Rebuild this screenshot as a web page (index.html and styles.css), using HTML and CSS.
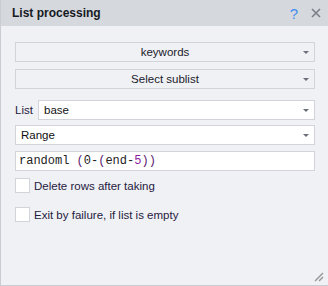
FILE: index.html
```html
<!DOCTYPE html>
<html lang="en">
<head>
    <meta charset="UTF-8">
    <title>List processing</title>
    <link rel="stylesheet" href="styles.css">
</head>
<body>
    <div class="window">
        <div class="titlebar">
            <span class="title">List processing</span>
            <span class="help">?</span>
            <svg class="close" width="10" height="10" viewBox="0 0 10 10">
                <path d="M1 1 L9 9 M9 1 L1 9" stroke="#7a7f8a" stroke-width="1.6"/>
            </svg>
        </div>
        <div class="content">
            <div class="select">keywords<span class="arrow"></span></div>
            <div class="select">Select sublist<span class="arrow"></span></div>

            <div class="row list-row">
                <label class="label">List</label>
                <div class="select white">base<span class="arrow"></span></div>
            </div>
            <div class="select white range">Range<span class="arrow"></span></div>
            <div class="field">randoml <span class="br">(</span>0-<span class="br">(</span>end-<span class="num">5</span><span class="br">))</span></div>

            <div class="check first"><span class="box"></span>Delete rows after taking</div>
            <div class="check"><span class="box"></span>Exit by failure, if list is empty</div>
        </div>
        <div class="grip">
            <svg width="11" height="11" viewBox="0 0 11 11">
                <path d="M10 2 L2 10 M10 6 L6 10" stroke="#9a9a9a" stroke-width="1.5"/>
            </svg>
        </div>
    </div>
</body>
</html>
```

FILE: styles.css
```css
body {
    margin: 0;
    font-family: "Liberation Sans", Arial, sans-serif;
    font-size: 11.5px;
    background: #f0f1f5;
    color: #1f2040;
}

.window {
    width: 328px;
    height: 286px;
    box-sizing: border-box;
    border-left: 1px solid #c9ccd2;
    border-bottom: 1px solid #c9ccd2;
    display: flex;
    flex-direction: column;
    position: relative;
    background: #f0f1f5;
}

.titlebar {
    height: 26px;
    background: #d5d8dd;
    display: flex;
    align-items: center;
    padding: 0 7px 0 11px;
}

.title {
    font-weight: bold;
    font-size: 12px;
    color: #151a24;
    flex: 1;
}

.help {
    color: #3d8ef0;
    font-size: 15px;
    margin-right: 13px;
}

.content {
    padding: 16px 13px 0 14px;
    display: flex;
    flex-direction: column;
}

.select {
    height: 20px;
    box-sizing: border-box;
    border: 1px solid #d2d4da;
    display: flex;
    align-items: center;
    justify-content: center;
    position: relative;
    color: #1a1a2a;
    margin-bottom: 7px;
}

.select.white {
    background: #fff;
    justify-content: flex-start;
    padding-left: 5px;
    color: #111;
    margin-bottom: 5px;
}

.select.range {
    margin-bottom: 6px;
}

.arrow {
    position: absolute;
    right: 5px;
    top: 8px;
    width: 0;
    height: 0;
    border-left: 3px solid transparent;
    border-right: 3px solid transparent;
    border-top: 3px solid #6a6f7a;
}

.row {
    display: flex;
    align-items: flex-start;
}

.list-row {
    margin-top: 4px;
}

.label {
    width: 23px;
    line-height: 20px;
}

.row .select {
    flex: 1;
}

.field {
    height: 20px;
    box-sizing: border-box;
    border: 1px solid #d2d4da;
    background: #fff;
    font-family: "Liberation Mono", monospace;
    font-size: 12px;
    line-height: 18px;
    padding-left: 3px;
    color: #222;
}

.br {
    color: #5a2070;
}

.num {
    color: #8a1aa0;
}

.check {
    display: flex;
    align-items: center;
    height: 15px;
    margin-top: 14px;
}

.check.first {
    margin-top: 7px;
}

.box {
    width: 13px;
    height: 13px;
    border: 1px solid #d2d4da;
    background: #fff;
    margin-right: 4px;
}

.grip {
    position: absolute;
    right: 4px;
    bottom: 3px;
    line-height: 0;
}
```
